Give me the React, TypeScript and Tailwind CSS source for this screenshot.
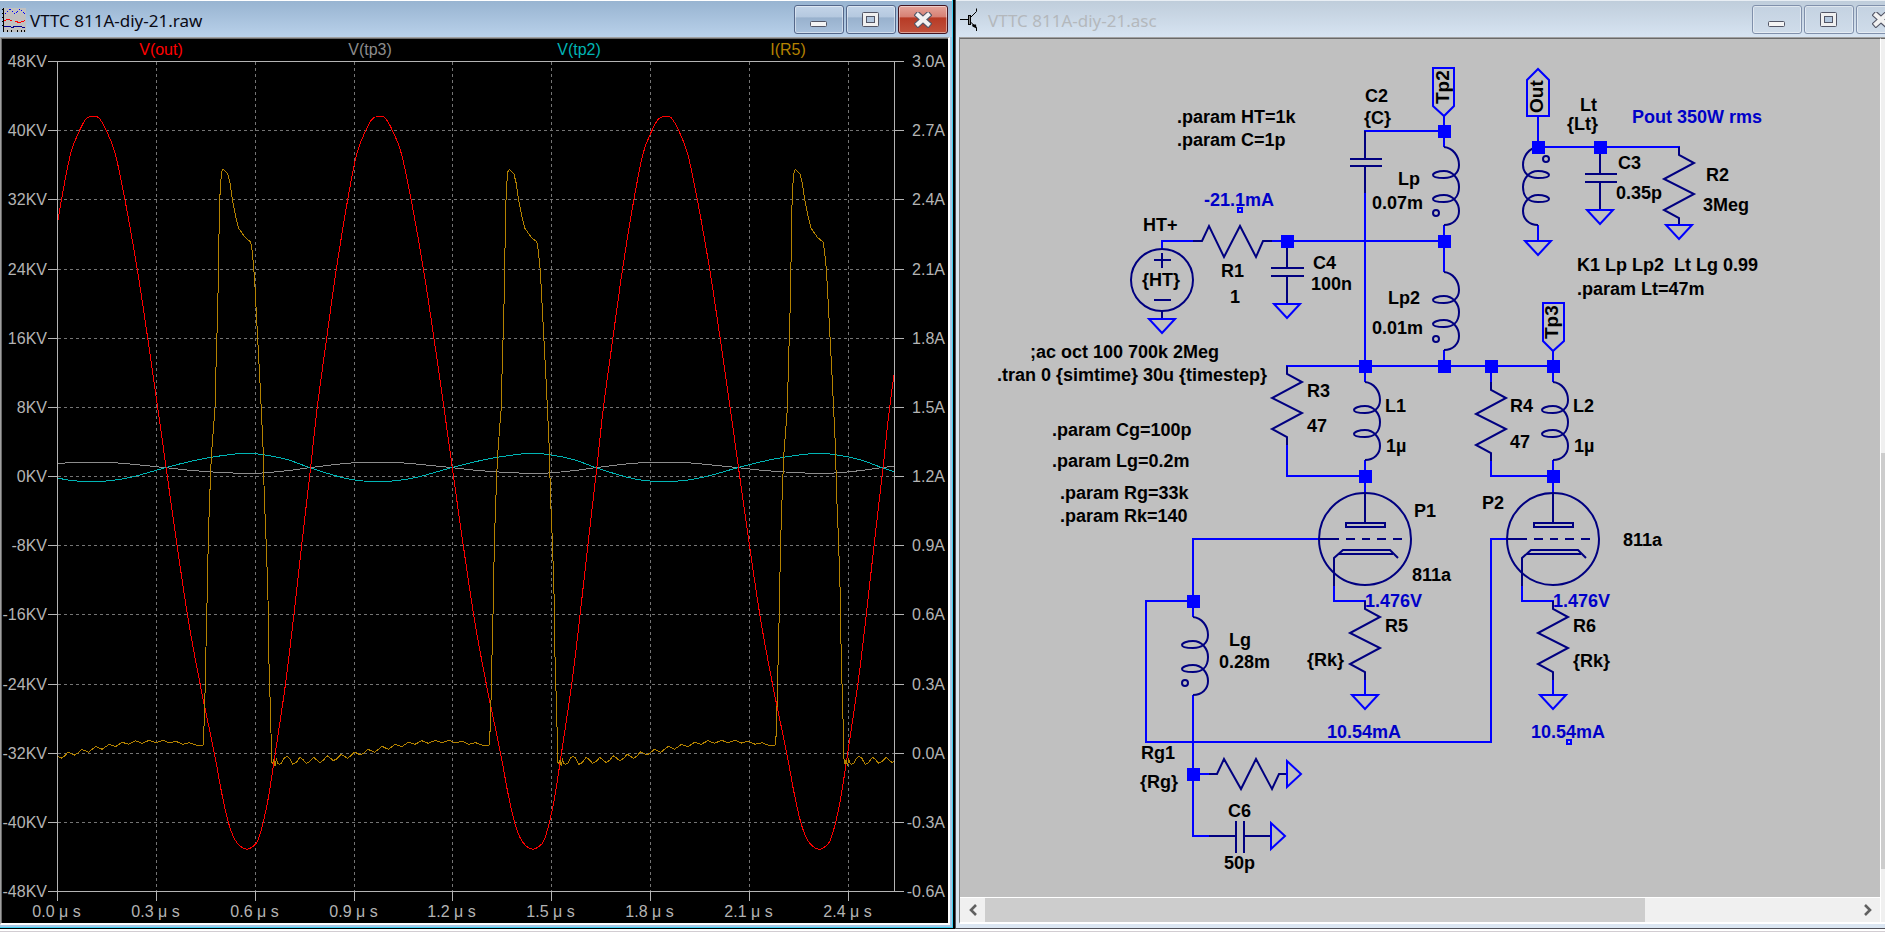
import React from "react";

type Point = [number, number];

/* ------------------------------------------------------------------ */
/* Window chrome                                                       */
/* ------------------------------------------------------------------ */

function CaptionButton({
  kind,
  active,
  label,
}: {
  kind: "min" | "max" | "close";
  active: boolean;
  label: string;
}) {
  const skin = !active
    ? "border-[#8090ab] bg-linear-to-b from-[#c4d2e1] to-[#cfdcea]"
    : kind === "close"
      ? "border-[#431420] bg-[linear-gradient(to_bottom,#e4a49a_0%,#d67f73_42%,#b73a25_43%,#c0523c_100%)]"
      : "border-[#54678a] bg-[linear-gradient(to_bottom,#c3d4e8_0%,#b4c8df_42%,#98b1cd_43%,#a9c1dc_100%)]";
  return (
    <button
      type="button"
      aria-label={label}
      className={`flex h-[29px] w-[50px] items-center justify-center rounded-[3px] border ${skin} shadow-[inset_0_0_0_1px_rgba(255,255,255,0.45)]`}
    >
      {kind === "min" && (
        <svg viewBox="0 0 18 16" className="h-4 w-[18px]" aria-hidden="true">
          <rect x="0.5" y="9.5" width="16" height="5" rx="1" fill="#f4f4f4" stroke="#535666" />
        </svg>
      )}
      {kind === "max" && (
        <svg viewBox="0 0 18 16" className="h-4 w-[18px]" aria-hidden="true">
          <rect x="0.5" y="0.5" width="16" height="14" rx="1" fill="#f0f0f0" stroke="#535666" />
          <rect x="4.5" y="4.5" width="8" height="6" fill="#b4c8df" stroke="#535666" />
        </svg>
      )}
      {kind === "close" && (
        <svg viewBox="0 0 18 16" className="h-4 w-[18px]" aria-hidden="true">
          <path d="M4 3 L14 12 M14 3 L4 12" stroke="#535666" strokeWidth="6.4" strokeLinecap="square" fill="none" />
          <path d="M4 3 L14 12 M14 3 L4 12" stroke="#f2f2f2" strokeWidth="4.2" strokeLinecap="square" fill="none" />
        </svg>
      )}
    </button>
  );
}

function CaptionButtons({ active }: { active: boolean }) {
  return (
    <div className="ml-auto flex gap-[2px]">
      <CaptionButton kind="min" active={active} label="Minimize" />
      <CaptionButton kind="max" active={active} label="Maximize" />
      <CaptionButton kind="close" active={active} label="Close" />
    </div>
  );
}

function WaveformIcon() {
  return (
    <svg viewBox="0 0 24 24" className="size-6 shrink-0" shapeRendering="crispEdges" aria-hidden="true">
      <rect x="2" y="0" width="22" height="24" fill="#c0c0c0" />
      <path d="M1.5 0 V24" stroke="#000" />
      <path d="M0 1.5 H2 M0 5.5 H2 M0 9.5 H2 M0 13.5 H2 M0 17.5 H2" stroke="#000" />
      <path d="M5 23 H6 M9 23 H10 M15 23 H16 M19 23 H20 M22 23 H23" stroke="#000" strokeWidth="2" />
      <path d="M3 6 L8 1 L13 6 L18 1 L23 6" stroke="#00f" strokeDasharray="1.5 1" fill="none" />
      <path d="M2 12.5 L6 11.5 L10 12.5 M13 13.5 L18 14.5 L23 12.5" stroke="#f00" fill="none" />
      <path d="M2 18.5 H8 L10 19.5 L13 18.5 H17 L23 19.5" stroke="#000090" fill="none" />
    </svg>
  );
}

function TransistorIcon() {
  return (
    <svg viewBox="0 0 18 24" className="h-6 w-[18px] shrink-0" aria-hidden="true">
      <path d="M0 11.5 H8 M11 9 L16.5 3.5 V0.5 M11 14.5 L16.5 19.5 V23" stroke="#000" fill="none" />
      <rect x="8.5" y="7.5" width="2" height="9" fill="#8c8c8c" stroke="#000" />
      <path d="M12 16.5 L16 16.500 L16.500 20.500 L12.500 18.500 Z" fill="#000" />
    </svg>
  );
}

/* ------------------------------------------------------------------ */
/* Waveform plot                                                       */
/* ------------------------------------------------------------------ */

const PLOT = { left: 57.5, right: 894.5, top: 61.5, bottom: 891.5 };
const PERIOD = 286.2;

const LEFT_AXIS = ["48KV", "40KV", "32KV", "24KV", "16KV", "8KV", "0KV", "-8KV", "-16KV", "-24KV", "-32KV", "-40KV", "-48KV"];
const RIGHT_AXIS = ["3.0A", "2.7A", "2.4A", "2.1A", "1.8A", "1.5A", "1.2A", "0.9A", "0.6A", "0.3A", "0.0A", "-0.3A", "-0.6A"];
const TIME_AXIS = ["0.0 μ s", "0.3 μ s", "0.6 μ s", "0.9 μ s", "1.2 μ s", "1.5 μ s", "1.8 μ s", "2.1 μ s", "2.4 μ s"];

const rowY = (i: number) => Math.floor(PLOT.top + (i * (PLOT.bottom - PLOT.top)) / 12) + 0.5;
const colX = (i: number) => Math.floor(PLOT.left + i * 98.87) + 0.5;

// One cycle of V(out).
const OUT_CYCLE: Point[] = [
  [93.3, 116.5], [99, 118], [106, 130], [115, 153], [125, 200], [137.3, 269.5], [147.7, 338], [157.5, 406],
  [166, 467], [177, 545], [188.3, 620], [200, 683.5], [214.3, 753], [221.5, 792], [228, 821], [234, 838],
  [240, 846], [246.7, 849.3], [252, 847], [257.5, 841], [263.3, 822], [268.5, 797], [275.3, 753], [285.5, 684],
  [293.3, 620], [301.7, 545], [310.7, 467], [317.3, 407], [326.7, 338], [336.3, 269.5], [347.7, 199.5],
  [357, 153], [366, 130], [372.7, 118.5],
];

// One cycle of V(tp2).
const TP2_CYCLE: Point[] = [
  [93.3, 481.5], [112, 480.5], [134, 476.5], [166, 467.5], [190, 461.5], [213, 457], [243, 453.4],
  [262, 454.5], [287, 459.5], [310.7, 468], [340, 477], [358, 480.5],
];

// One cycle of V(tp3).
const TP3_CYCLE: Point[] = [
  [93.3, 462.4], [112, 462.6], [140, 465], [166, 467.7], [190, 470.3], [213, 472], [243, 473.4],
  [262, 473], [287, 470.7], [310.7, 467.5], [340, 464], [358, 462.6],
];

// One cycle of I(R5), as x / y pairs at three units to the pixel.
const R5_CYCLE: Point[] = [
  [610, 2234], [612, 2180], [615, 2082], [618, 1940], [620, 1860], [623, 1700], [626, 1580], [629, 1493],
  [634, 1370], [640, 1290], [645, 1225], [647, 1135], [650, 1030], [653, 930], [656, 770], [658, 640],
  [661, 560], [665, 515], [669, 508], [683, 522], [690, 550], [697, 598], [707, 650], [716, 685],
  [735, 712], [752, 726], [756, 750], [761, 800], [765, 860], [770, 960], [775, 1050], [779, 1130],
  [784, 1230], [789, 1340], [793, 1490], [797, 1590], [801, 1700], [805, 1830], [806, 1960], [810, 2090],
  [813, 2200], [815, 2288], [818, 2290], [821, 2280], [825, 2297], [829, 2278], [833, 2290], [838, 2293],
  [845, 2289], [852, 2275], [860, 2269], [868, 2274], [878, 2293], [888, 2288], [900, 2272], [908, 2278],
  [919, 2290], [930, 2284], [941, 2272], [950, 2280], [960, 2288], [971, 2280], [981, 2267], [991, 2274],
  [1000, 2282], [1011, 2276], [1023, 2263], [1032, 2268], [1042, 2275], [1052, 2268], [1063, 2256], [1082, 2265],
  [1092, 2259], [1104, 2248], [1124, 2257], [1146, 2239], [1165, 2248], [1186, 2233], [1205, 2240], [1225, 2227],
  [1245, 2233], [1265, 2222], [1285, 2230], [1306, 2221], [1326, 2228], [1348, 2221], [1366, 2229], [1386, 2224],
  [1407, 2233], [1427, 2228], [1448, 2236], [1467, 2235],
];

function repeat(points: Point[]): Point[] {
  const all: Point[] = [];
  for (let k = -1; k <= 3; k++) {
    for (const [x, y] of points) all.push([x + k * PERIOD, y]);
  }
  return all;
}

function polyPath(points: Point[]): string {
  return points.map(([x, y], i) => `${i ? "L" : "M"}${x.toFixed(1)} ${y.toFixed(1)}`).join(" ");
}

function smoothPath(points: Point[]): string {
  let d = `M${points[0][0].toFixed(1)} ${points[0][1].toFixed(1)}`;
  for (let i = 0; i < points.length - 1; i++) {
    const p0 = points[Math.max(i - 1, 0)];
    const p1 = points[i];
    const p2 = points[i + 1];
    const p3 = points[Math.min(i + 2, points.length - 1)];
    const c1 = [p1[0] + (p2[0] - p0[0]) / 6, p1[1] + (p2[1] - p0[1]) / 6];
    const c2 = [p2[0] - (p3[0] - p1[0]) / 6, p2[1] - (p3[1] - p1[1]) / 6];
    d += ` C${c1[0].toFixed(1)} ${c1[1].toFixed(1)} ${c2[0].toFixed(1)} ${c2[1].toFixed(1)} ${p2[0].toFixed(1)} ${p2[1].toFixed(1)}`;
  }
  return d;
}

function Plot() {
  const axis = "#b4b4b4";
  return (
    <svg
      viewBox="2 39 946 884"
      className="block h-auto w-full bg-black font-['Liberation_Sans',sans-serif] text-[16px]"
      role="img"
      aria-label="Waveforms"
    >
      <clipPath id="plot-area">
        <rect x="57" y="61" width="838" height="831" />
      </clipPath>

      <g shapeRendering="crispEdges" fill="none">
        <g stroke="#747474" strokeDasharray="3 3">
          {LEFT_AXIS.slice(1, -1).map((_, i) => (
            <path key={i} d={`M${PLOT.left} ${rowY(i + 1)} H${PLOT.right}`} />
          ))}
          {TIME_AXIS.slice(1).map((_, i) => (
            <path key={i} d={`M${colX(i + 1)} ${PLOT.top} V${PLOT.bottom}`} />
          ))}
        </g>
        <g clipPath="url(#plot-area)">
          <path d={smoothPath(repeat(TP3_CYCLE))} stroke="#8c8c8c" />
          <path d={smoothPath(repeat(TP2_CYCLE))} stroke="#00b4b4" />
          <path d={smoothPath(repeat(OUT_CYCLE))} stroke="#ff0000" />
          <path d={polyPath(repeat(R5_CYCLE.map(([x, y]): Point => [x / 3, y / 3])))} stroke="#b48200" />
        </g>
        <g stroke={axis}>
          <path d={`M48 ${PLOT.top} H904 M48 ${PLOT.bottom} H904 M${PLOT.left} 61 V901 M${PLOT.right} 61 V892`} />
          {LEFT_AXIS.slice(1, -1).map((_, i) => (
            <path key={i} d={`M48 ${rowY(i + 1)} H57 M895 ${rowY(i + 1)} H904`} />
          ))}
          {TIME_AXIS.slice(1).map((_, i) => (
            <path key={i} d={`M${colX(i + 1)} 892 V901`} />
          ))}
        </g>
      </g>

      <g fill={axis}>
        {LEFT_AXIS.map((t, i) => (
          <text key={t} x="47" y={rowY(i) + 5.5} textAnchor="end">{t}</text>
        ))}
        {RIGHT_AXIS.map((t, i) => (
          <text key={t} x="945" y={rowY(i) + 5.5} textAnchor="end">{t}</text>
        ))}
        {TIME_AXIS.map((t, i) => (
          <text key={t} x={colX(i) - 1} y="917" textAnchor="middle">{t}</text>
        ))}
      </g>
      <g textAnchor="middle">
        <text x="161" y="55" fill="#ff0000">V(out)</text>
        <text x="370" y="55" fill="#8c8c8c">V(tp3)</text>
        <text x="579" y="55" fill="#00b4b4">V(tp2)</text>
        <text x="788" y="55" fill="#b48200">I(R5)</text>
      </g>
    </svg>
  );
}

/* ------------------------------------------------------------------ */
/* Schematic                                                           */
/* ------------------------------------------------------------------ */

const WIRE = "#0000ff";
const PART = "#000080";

const at = (x: number, y: number) => `translate(${x} ${y})`;

function Inductor({ x, y, flip = false }: { x: number; y: number; flip?: boolean }) {
  return (
    <path
      transform={`${at(x, y)} scale(${flip ? -1 : 1} 1)`}
      stroke={PART}
      d="M0 0 C9 1 15 9 15 18 C15 26 9 31 0 31 C-7 31 -11 30 -11 28 C-11 26 -6 24 0 24 C9 24 15 32 15 40 C15 50 9 55 0 55 C-7 55 -11 54 -11 52 C-11 50 -6 48 0 48 C9 48 15 56 15 64 C15 72 9 78 0 78"
    />
  );
}

function Resistor({ x, y }: { x: number; y: number }) {
  return <path transform={at(x, y)} stroke={PART} d="M0 0 V8 L15 16 L-15 32 L15 47 L-15 63 L0 71 V79" />;
}

function Ground({ x, y, side = false }: { x: number; y: number; side?: boolean }) {
  return (
    <path
      transform={`${at(x, y)}${side ? " rotate(-90)" : ""}`}
      stroke={WIRE}
      d="M-13 0 H13 L0 14 Z"
    />
  );
}

function Triode({ x, y }: { x: number; y: number }) {
  return (
    <g transform={at(x, y)} stroke={PART}>
      <circle r="46" />
      <path d="M0 -47 V-17 M-19 -16 H20 V-12 H-19 Z" />
      <path d="M-46 0 H-26 M-19 0 H-10 M-3 0 H5 M12 0 H21 M28 0 H37" />
      <path d="M-31 47 V19 L-22 11 H25 L33 19 M-26 15 H28" />
    </g>
  );
}

const JUNCTIONS: Point[] = [
  [1444, 131], [1538, 147], [1600, 147], [1287, 241], [1444, 241], [1365, 366], [1444, 366],
  [1491, 366], [1553, 366], [1365, 476], [1553, 476], [1193, 601], [1193, 774],
];

const LABELS: [number, number, string][] = [
  [1177, 123, ".param HT=1k"], [1177, 146, ".param C=1p"], [1365, 102, "C2"], [1364, 124, "{C}"],
  [1398, 185, "Lp"], [1372, 209, "0.07m"], [1143, 231, "HT+"], [1142, 286, "{HT}"], [1221, 277, "R1"],
  [1230, 303, "1"], [1313, 269, "C4"], [1311, 290, "100n"], [1388, 304, "Lp2"], [1372, 334, "0.01m"],
  [1030, 358, ";ac oct 100 700k 2Meg"], [997, 381, ".tran 0 {simtime} 30u {timestep}"],
  [1052, 436, ".param Cg=100p"], [1052, 467, ".param Lg=0.2m"], [1060, 499, ".param Rg=33k"],
  [1060, 522, ".param Rk=140"], [1307, 397, "R3"], [1307, 432, "47"], [1385, 412, "L1"], [1386, 452, "1µ"],
  [1510, 412, "R4"], [1510, 448, "47"], [1573, 412, "L2"], [1574, 452, "1µ"], [1414, 517, "P1"],
  [1412, 581, "811a"], [1482, 509, "P2"], [1623, 546, "811a"], [1385, 632, "R5"], [1307, 666, "{Rk}"],
  [1573, 632, "R6"], [1573, 667, "{Rk}"], [1229, 646, "Lg"], [1219, 668, "0.28m"], [1141, 759, "Rg1"],
  [1140, 788, "{Rg}"], [1228, 817, "C6"], [1224, 869, "50p"], [1580, 111, "Lt"], [1567, 130, "{Lt}"],
  [1618, 169, "C3"], [1616, 199, "0.35p"], [1706, 181, "R2"], [1703, 211, "3Meg"],
  [1577, 271, "K1 Lp Lp2  Lt Lg 0.99"], [1577, 295, ".param Lt=47m"],
];

const READINGS: [number, number, string][] = [
  [1204, 206, "-21.1mA"], [1632, 123, "Pout 350W rms"], [1365, 607, "1.476V"], [1553, 607, "1.476V"],
  [1327, 738, "10.54mA"], [1531, 738, "10.54mA"],
];

const FLAGS: [number, number, string][] = [
  [1449, 104, "Tp2"], [1543, 113, "Out"], [1558, 339, "Tp3"],
];

function Schematic() {
  return (
    <svg
      viewBox="960 39 920 858"
      className="block h-auto w-full bg-[#c0c0c0] font-['Liberation_Sans',sans-serif] text-[18px] font-bold"
      role="img"
      aria-label="Circuit schematic"
    >
      <g fill="none" strokeWidth="2">
        <g stroke={WIRE}>
          <path d="M1364 131 H1444 M1365 193 V382 M1444 116 V147 M1444 225 V272 M1444 350 V366" />
          <path d="M1538 116 V147 H1680 M1538 225 V241" />
          <path d="M1162 249 V241 H1193 M1272 241 H1444" />
          <path d="M1286 366 H1553 M1553 351 V382 M1491 366 V382" />
          <path d="M1287 445 V476 H1365 M1365 460 V492 M1491 460 V476 H1553 M1553 460 V492" />
          <path d="M1193 617 V539 H1319 M1193 601 H1146 V742 H1491 V539 H1507 M1193 695 V836 H1209 M1193 774 H1209" />
          <path d="M1334 586 V601 H1366 M1522 586 V601 H1554 M1365 679 V695 M1553 679 V695" />
          <path d="M1433 68 H1454 V106 L1444 116 L1433 106 Z" />
          <path d="M1527 116 H1549 V80 L1538 69 L1527 80 Z" />
          <path d="M1543 303 H1564 V341 L1553 351 L1543 341 Z" />
          <path d="M1238 208 H1242 V212 H1238 Z M1567 740 H1571 V744 H1567 Z" />
        </g>

        <g stroke={PART}>
          <path d="M1365 131 V159 M1350 159 H1382 M1350 166 H1382 M1365 166 V193" />
          <path d="M1287 241 V268 M1271 268 H1304 M1271 276 H1304 M1287 276 V304" />
          <path d="M1600 147 V174 M1585 174 H1617 M1585 182 H1617 M1600 182 V210" />
          <path d="M1209 836 H1236 M1236 821 V853 M1244 821 V853 M1244 836 H1271" />
          <path d="M1193 241 H1202 L1209 226 L1224 257 L1240 226 L1256 257 L1263 241 H1272" />
          <path d="M1209 774 H1217 L1224 759 L1241 789 L1256 759 L1272 789 L1279 774 H1287" />
          <circle cx="1162" cy="280" r="31" />
          <path d="M1154 260 H1171 M1162 253 V268 M1154 300 H1171 M1162 311 V319" />
          <circle cx="1436" cy="213" r="3" />
          <circle cx="1546" cy="159" r="3" />
          <circle cx="1436" cy="339" r="3" />
          <circle cx="1185" cy="683" r="3" />
        </g>

        <Inductor x={1444} y={147} />
        <Inductor x={1538} y={147} flip />
        <Inductor x={1444} y={272} />
        <Inductor x={1365} y={382} />
        <Inductor x={1553} y={382} />
        <Inductor x={1193} y={617} />

        <Resistor x={1679} y={147} />
        <Resistor x={1287} y={366} />
        <Resistor x={1491} y={382} />
        <Resistor x={1365} y={601} />
        <Resistor x={1553} y={601} />

        <Triode x={1365} y={539} />
        <Triode x={1553} y={539} />

        <Ground x={1162} y={319} />
        <Ground x={1287} y={304} />
        <Ground x={1538} y={241} />
        <Ground x={1600} y={210} />
        <Ground x={1679} y={225} />
        <Ground x={1365} y={695} />
        <Ground x={1553} y={695} />
        <Ground x={1287} y={774} side />
        <Ground x={1271} y={836} side />
      </g>

      <g fill={WIRE}>
        {JUNCTIONS.map(([x, y]) => (
          <rect key={`${x}-${y}`} x={x - 6} y={y - 6} width="13" height="13" />
        ))}
      </g>

      <g fill="#000">
        {LABELS.map(([x, y, t]) => (
          <text key={`${x}-${y}`} x={x} y={y} className="whitespace-pre">{t}</text>
        ))}
        {FLAGS.map(([x, y, t]) => (
          <text key={t} transform={`${at(x, y)} rotate(-90)`} className="text-[19px]">{t}</text>
        ))}
      </g>
      <g fill="#0000c8">
        {READINGS.map(([x, y, t]) => (
          <text key={`${x}-${y}`} x={x} y={y}>{t}</text>
        ))}
      </g>
    </svg>
  );
}

/* ------------------------------------------------------------------ */
/* Scroll bars                                                         */
/* ------------------------------------------------------------------ */

function ScrollArrow({ dir }: { dir: "left" | "right" }) {
  return (
    <button
      type="button"
      aria-label={dir === "left" ? "Scroll left" : "Scroll right"}
      className="flex w-[25px] shrink-0 items-center justify-center bg-[#f0f0f0]"
    >
      <svg viewBox="0 0 10 12" className="h-3 w-[10px]" aria-hidden="true">
        <path d={dir === "left" ? "M8 1 L3 6 L8 11" : "M2 1 L7 6 L2 11"} stroke="#606060" strokeWidth="2.6" fill="none" />
      </svg>
    </button>
  );
}

export default function App() {
  return (
    <main className="flex min-h-screen flex-col overflow-hidden bg-white">
      <div className="grid grid-cols-[955fr_930fr] items-start">
        <section className="min-w-0 border-r-2 border-b border-black">
          <div className="border-r border-b border-[#3fd0f0] bg-[#a9c8e6]">
            <header className="flex h-[37px] items-start border-t border-white bg-linear-to-b from-[#98b4d1] to-[#b9d1ea] pt-1 pr-1 pl-[2px]">
              <div className="flex items-center gap-1 pt-[2px]">
                <WaveformIcon />
                <h1 className="pt-[2px] font-['Noto_Sans',sans-serif] text-[17px] leading-6 text-[#0a0a14]">VTTC 811A-diy-21.raw</h1>
              </div>
              <CaptionButtons active />
            </header>
            <div className="border-r-2 border-b-2 border-[#a9c8e6]">
              <div className="border-t border-r-2 border-b-2 border-l border-t-[#a0a0a0] border-r-white border-b-white border-l-[#a0a0a0]">
                <div className="border-t border-l border-[#696969]">
                  <Plot />
                </div>
              </div>
            </div>
          </div>
        </section>

        <section className="min-w-0 overflow-hidden border-b border-l border-[#505058]">
          <div className="-mr-6">
            <header className="flex h-[37px] items-start border-t border-[#e8eef4] bg-linear-to-b from-[#bfcddb] to-[#d7e4f2] pt-1 pr-[3px] pl-1">
              <div className="flex items-center gap-[10px] pt-[2px]">
                <TransistorIcon />
                <h1 className="pt-[2px] font-['Noto_Sans',sans-serif] text-[17px] leading-6 text-[#b4b8bc]">VTTC 811A-diy-21.asc</h1>
              </div>
              <CaptionButtons active={false} />
            </header>
            <div className="border-b-4 border-l-[3px] border-[#dbe6f2]">
              <div className="flex border-t border-b-2 border-l border-t-[#a0a0a0] border-b-white border-l-[#808080]">
                <div className="min-w-0 flex-1 border-t border-[#696969]">
                  <Schematic />
                  <div className="flex h-[25px] border-t border-white bg-[#f0f0f0]">
                    <ScrollArrow dir="left" />
                    <div className="flex flex-1">
                      <div className="flex-[660] bg-[#cdcdcd]" />
                      <div className="flex-[210]" />
                    </div>
                    <ScrollArrow dir="right" />
                  </div>
                </div>
                <div className="flex w-[29px] flex-col border-t border-l border-t-[#696969] border-l-white bg-[#f0f0f0]">
                  <div className="flex-[414]" />
                  <div className="flex-[416] bg-[#cdcdcd]" />
                  <div className="flex-[53]" />
                </div>
              </div>
            </div>
          </div>
        </section>
      </div>
      <footer className="mt-[2px] flex-1 border-t border-[#d2cdd2] bg-white" />
    </main>
  );
}
